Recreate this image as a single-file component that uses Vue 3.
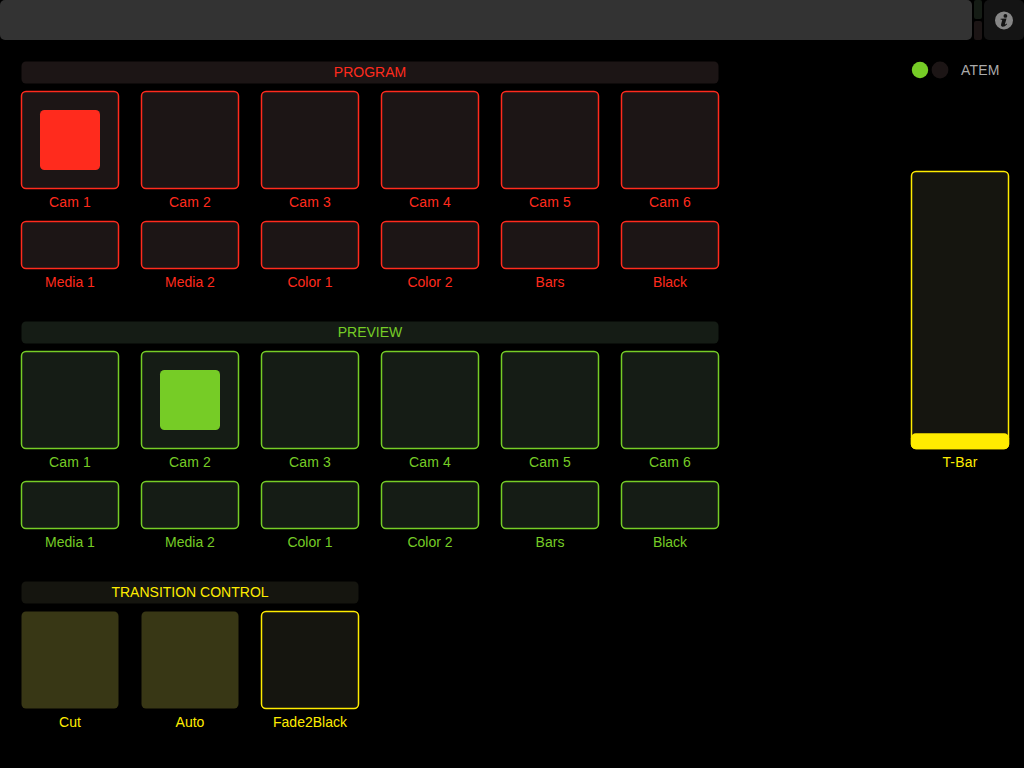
<script setup>
const cams = ['Cam 1', 'Cam 2', 'Cam 3', 'Cam 4', 'Cam 5', 'Cam 6']
const sources = ['Media 1', 'Media 2', 'Color 1', 'Color 2', 'Bars', 'Black']
const buses = [
  { title: 'PROGRAM', tone: 'red', active: 0 },
  { title: 'PREVIEW', tone: 'green', active: 1 },
]
const transitions = [
  { label: 'Cut', kind: 'push' },
  { label: 'Auto', kind: 'push' },
  { label: 'Fade2Black', kind: 'toggle' },
]
</script>

<template>
  <div class="screen">
    <header class="topbar">
      <div class="tabs"></div>
      <div class="leds">
        <span class="led led-in"></span>
        <span class="led led-out"></span>
      </div>
      <div class="info">
        <svg width="40" height="40" viewBox="0 0 40 40">
          <circle cx="20" cy="20.4" r="9" fill="#868686" />
          <circle cx="21.4" cy="15.9" r="1.9" fill="#141414" />
          <path d="M16.6 18.7 L22.5 18.4 L20.9 24.3 Q20.8 25.1 22.6 23.6 L23.1 24.2 Q20.6 26.9 18.5 26.7 Q16.5 26.4 17.1 24.2 L18.2 20.3 Q18.3 19.5 16.5 19.5 Z" fill="#141414" />
        </svg>
      </div>
    </header>

    <main class="main">
      <div class="left">
        <section v-for="bus in buses" :key="bus.title" class="section" :class="bus.tone">
          <h2 class="title">
            <svg class="title-bg" width="700" height="30">
              <rect x="1.5" y="1.5" width="697" height="22" rx="4.5" />
            </svg>
            <span class="title-text">{{ bus.title }}</span>
          </h2>
          <div class="row">
            <div v-for="(name, i) in cams" :key="name" class="cell">
              <svg width="100" height="100">
                <rect class="box" x="1.5" y="1.5" width="97" height="97" rx="4.5" />
                <rect v-if="i === bus.active" class="mark" x="20" y="20" width="60" height="60" rx="4.5" />
              </svg>
              <span class="label loose">{{ name }}</span>
            </div>
          </div>
          <div class="row">
            <div v-for="name in sources" :key="name" class="cell">
              <svg width="100" height="50">
                <rect class="box" x="1.5" y="1.5" width="97" height="47" rx="4.5" />
              </svg>
              <span class="label">{{ name }}</span>
            </div>
          </div>
        </section>

        <section class="section yellow">
          <h2 class="title short">
            <svg class="title-bg" width="340" height="30">
              <rect x="1.5" y="1.5" width="337" height="22" rx="4.5" />
            </svg>
            <span class="title-text">TRANSITION CONTROL</span>
          </h2>
          <div class="row">
            <div v-for="t in transitions" :key="t.label" class="cell">
              <svg width="100" height="100">
                <rect :class="t.kind === 'push' ? 'push' : 'box'" x="1.5" y="1.5" width="97" height="97" rx="4.5" />
              </svg>
              <span class="label">{{ t.label }}</span>
            </div>
          </div>
        </section>
      </div>

      <aside class="right yellow">
        <div class="status">
          <svg width="40" height="20">
            <circle cx="10" cy="10" r="8.2" fill="#76cc26" />
            <circle cx="30" cy="10" r="8.4" fill="#1c1515" />
          </svg>
          <span class="device">ATEM</span>
        </div>
        <div class="cell">
          <svg width="100" height="280">
            <rect class="box" x="1.5" y="1.5" width="97" height="277" rx="4.5" />
            <rect class="mark" x="0.9" y="263.3" width="98.2" height="15.9" rx="5" />
          </svg>
          <span class="label loose">T-Bar</span>
        </div>
      </aside>
    </main>
  </div>
</template>

<style>
body {
  background: #000;
}
</style>

<style scoped>
.screen {
  width: 1024px;
  height: 768px;
  background: #000;
  font-family: "Liberation Sans", Arial, sans-serif;
  font-size: 14px;
  overflow: hidden;
}
.topbar {
  display: flex;
  height: 40px;
}
.tabs {
  width: 971.5px;
  border-radius: 5px;
  background: #333;
}
.leds {
  display: flex;
  flex-direction: column;
  gap: 2px;
  width: 8px;
  margin: 0 2px 0 2.5px;
}
.led {
  height: 19px;
  border-radius: 2px;
}
.led-in {
  background: #151c15;
}
.led-out {
  background: #1c1515;
}
.info {
  width: 40px;
  border-radius: 5px;
  background: #141414;
}
.main {
  display: flex;
  justify-content: space-between;
  padding: 20px 14px 0 20px;
}
svg {
  display: block;
}
.red {
  --tone: #ff2b1d;
  --fill: #1c1515;
}
.green {
  --tone: #76cc26;
  --fill: #151c15;
}
.yellow {
  --tone: #ffec00;
  --fill: #15150f;
}
.section {
  height: 260px;
  color: var(--tone);
}
.title {
  display: grid;
  width: 700px;
  height: 30px;
  margin: 0;
  font-size: 14px;
  font-weight: 400;
  line-height: 24px;
  text-align: center;
}
.title.short {
  width: 339px;
}
.title-bg,
.title-text {
  grid-area: 1 / 1;
}
.title-bg {
  fill: var(--fill);
}
.row {
  display: flex;
  gap: 20px;
}
.cell {
  width: 100px;
  color: var(--tone);
}
.label {
  display: block;
  height: 30px;
  line-height: 25px;
  text-align: center;
  white-space: nowrap;
}
.loose {
  letter-spacing: 0.2px;
}
.box {
  fill: var(--fill);
  stroke: var(--tone);
  stroke-width: 1.5px;
}
.push {
  fill: #383715;
}
.mark {
  fill: var(--tone);
}
.right {
  width: 100px;
}
.status {
  display: flex;
  height: 110px;
}
.device {
  box-sizing: border-box;
  width: 60px;
  padding-left: 11px;
  color: #aaa;
  line-height: 20px;
  letter-spacing: 0.2px;
}
</style>
